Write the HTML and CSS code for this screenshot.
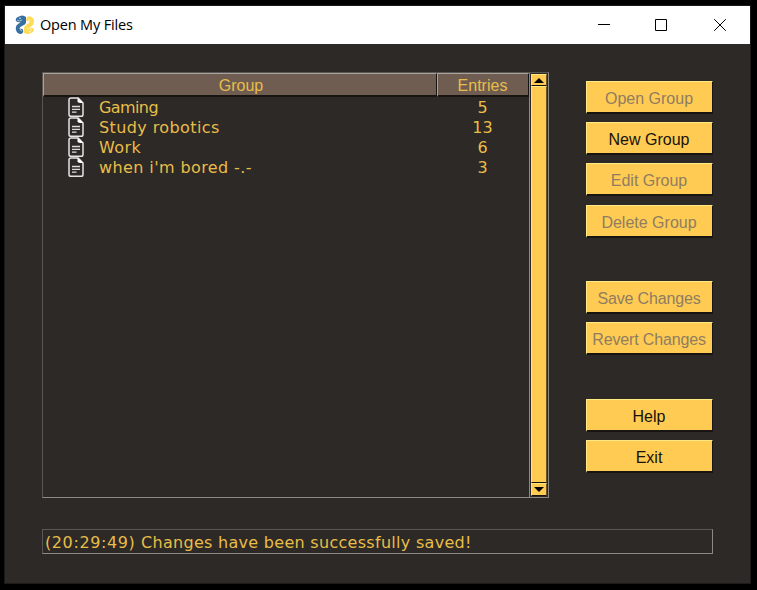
FILE: index.html
```html
<!DOCTYPE html>
<html lang="en">
<head>
<meta charset="utf-8">
<title>Open My Files</title>
<link rel="stylesheet" href="styles.css">
</head>
<body>
<svg class="defs" width="0" height="0" aria-hidden="true">
  <symbol id="doc" viewBox="0 0 16 20">
    <path d="M3.2 1H10.2L15 6V17.4Q15 19.2 13.2 19.2H3Q1 19.2 1 17.4V3Q1 1 3.2 1Z" fill="none" stroke="#e4e3e2" stroke-width="1.5"/>
    <path d="M9.5 .7V4.2Q9.8 5.8 12 6H15.3Z" fill="#fff"/>
    <path d="M4 9.5H12M4 12.3H12M4 15.1H8.5" stroke="#dddcdb" stroke-width="1.3"/>
  </symbol>
</svg>
<main class="window">
  <header class="titlebar">
    <svg class="logo" viewBox="0 0 20 20">
      <path d="M5 1Q8-.5 11 2L11 8Q10 10 7 11Q4 12 5 14Q7 13 8 15Q9 18 6 19Q2 19 1 15Q0 11 3 9L6 7Q3 8 1 6Q0 3 3 2Z" fill="#376f9f"/>
      <path d="M12 2Q15 0 18 3Q20 6 18 10L14 13Q17 12 19 14Q19 17 16 18Q13 20 9 18L9 13Q9 11 12 9Q15 8 14 6Q12 7 11 5Z" fill="#ffdc58"/>
      <path d="M7 5Q4 7 2 5M5 13Q5 16 7 16" fill="none" stroke="#a9c6dc"/>
      <path d="M13 5Q15 4 15 7M12 14Q15 13 17 15" fill="none" stroke="#fff0a3"/>
      <circle cx="5" cy="3.3" r=".7" fill="#fff"/><circle cx="15" cy="16.6" r=".7" fill="#fff"/>
    </svg>
    <h1 class="title">Open My Files</h1>
    <div class="controls">
      <svg viewBox="0 0 12 12"><path d="M0 5.5H12"/></svg>
      <svg viewBox="0 0 12 12"><path d="M.5.5H11.5V11.5H.5Z"/></svg>
      <svg class="close" viewBox="0 0 12 12"><path d="M.2.2L11.8 11.8M11.8.2L.2 11.8"/></svg>
    </div>
  </header>
  <div class="content">
    <section class="left">
      <div class="table">
        <div class="tree">
          <div class="row head"><div class="cell group">Group</div><div class="cell entries">Entries</div></div>
          <div class="row"><div class="name tight"><svg><use href="#doc"/></svg><span>Gaming</span></div><div class="count">5</div></div>
          <div class="row"><div class="name"><svg><use href="#doc"/></svg><span>Study robotics</span></div><div class="count">13</div></div>
          <div class="row"><div class="name"><svg><use href="#doc"/></svg><span>Work</span></div><div class="count">6</div></div>
          <div class="row"><div class="name"><svg><use href="#doc"/></svg><span>when i'm bored -.-</span></div><div class="count">3</div></div>
        </div>
        <div class="scrollbar">
          <div class="arrow"><svg viewBox="0 0 10 5"><path d="M5 0L10 5H0Z"/></svg></div>
          <div class="thumb"></div>
          <div class="arrow down"><svg viewBox="0 0 10 5"><path d="M0 0H10L5 5Z"/></svg></div>
        </div>
      </div>
    </section>
    <nav class="buttons">
      <div class="set">
        <button disabled>Open Group</button>
        <button>New Group</button>
        <button disabled>Edit Group</button>
        <button disabled>Delete Group</button>
      </div>
      <div class="set">
        <button class="narrow" disabled>Save Changes</button>
        <button class="narrow" disabled>Revert Changes</button>
      </div>
      <div class="set">
        <button>Help</button>
        <button>Exit</button>
      </div>
    </nav>
  </div>
  <footer class="status">(20:29:49) <span class="message">Changes have been successfully saved!</span></footer>
</main>
</body>
</html>
```

FILE: styles.css
```css
* { box-sizing: border-box; }
body { margin: 0; height: 590px; padding: 5px 6px 6px 4px; background: #000; overflow: hidden; }
.defs { display: block; position: absolute; }
.window { width: 747px; height: 579px; border: 1px solid #1c1a19; background: #2d2926; }
.titlebar { display: flex; align-items: center; height: 38px; padding-left: 10px; background: #fff; }
.logo { width: 20px; height: 20px; }
.title { margin: 0 0 0 5px; font: 400 14.5px/20px "Open Sans", sans-serif; letter-spacing: -.17px; color: #000; white-space: nowrap; }
.controls { display: flex; gap: 46px; margin-left: auto; margin-right: 24px; }
.controls svg { display: block; width: 12px; height: 12px; fill: none; stroke: #000; stroke-width: 1; }
.controls svg:first-child { margin-right: -1px; margin-left: -1px; }
.controls .close { margin-left: 1px; }
.content { display: flex; justify-content: space-between; padding: 28px 37px 0 37px; height: 485px; }
.table { display: flex; width: 507px; height: 426px; border: 1px solid #595654; border-right-color: #8b8886; border-bottom-color: #8b8886; }
.tree { width: 487px; border-right: 1px solid #8b8886; font: 16px/22px "DejaVu Sans", sans-serif; color: #e8bd49; }
.row { display: grid; grid-template-columns: 394px 92px; height: 20px; }
.head { height: 24px; font: 16px/23px "Liberation Sans", sans-serif; }
.cell { height: 24px; border: 1px solid #aaa39e; border-right-color: #171412; border-bottom: 2px solid #171412; background: #705d51; text-align: center; }
.group { padding-left: 2px; }
.entries { padding-right: 1px; }
.name { display: flex; padding-left: 25px; white-space: nowrap; letter-spacing: .4px; }
.tight { letter-spacing: -.6px; }
.name svg { width: 16px; height: 20px; margin-right: 15px; }
.count { text-align: center; padding-right: 1px; }
.scrollbar { display: flex; flex-direction: column; width: 18px; padding: 1px; }
.arrow { display: flex; justify-content: center; align-items: center; height: 12px; border: 1px solid #ffe878; border-right-color: #6a5528; border-bottom-color: #171412; background: #ffcb52; }
.arrow svg { display: block; width: 10px; height: 5px; }
.arrow.down { height: 13px; }
.thumb { flex: 1; border: 1px solid #ffe878; border-right-color: #6a5528; border-bottom-color: #171412; background: #ffcb52; }
.buttons { display: flex; flex-direction: column; gap: 43.5px; width: 127px; padding-top: 9px; }
.set { display: grid; gap: 8.2px; }
button { width: 127px; height: 33px; padding: 3px 1px 0 0; border: solid; border-width: 1px 1px 2px 1px; border-color: #ffe982 #171412 #171412 #ffe982; background: #ffcb52; color: #17120b; font: 16px/27px "Liberation Sans", sans-serif; white-space: nowrap; }
button:disabled { color: #8f7d62; }
.narrow { letter-spacing: -.15px; }
.status { width: 671px; height: 25px; margin-left: 37px; padding-left: 2px; border: 1px solid #595654; border-right-color: #8b8886; border-bottom-color: #8b8886; color: #e8bd49; font: 16px/25px "DejaVu Sans", sans-serif; letter-spacing: .6px; white-space: nowrap; }
.message { letter-spacing: .29px; }
```
